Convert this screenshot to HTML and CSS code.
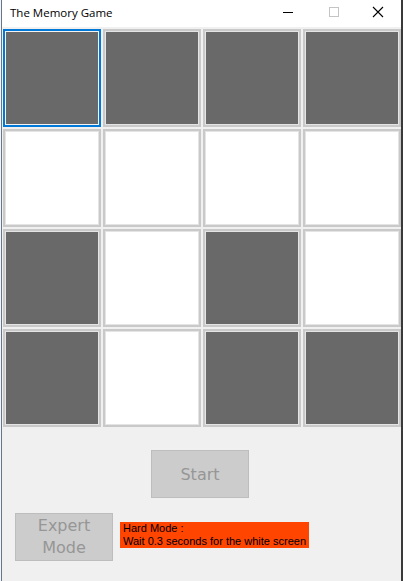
FILE: index.html
```html
<!DOCTYPE html>
<html>
<head>
<meta charset="utf-8">
<title>The Memory Game</title>
<link rel="stylesheet" href="styles.css">
</head>
<body>
<div class="window">
  <div class="titlebar">
    <span class="title">The Memory Game</span>
    <div class="controls">
      <span class="ctl"><svg width="46" height="27" viewBox="0 0 46 27"><line x1="20" y1="12.5" x2="30" y2="12.5" stroke="#000" stroke-width="1"/></svg></span>
      <span class="ctl"><svg width="46" height="27" viewBox="0 0 46 27"><rect x="20.5" y="7.5" width="9" height="9" fill="none" stroke="#c4c4c4" stroke-width="1"/></svg></span>
      <span class="ctl"><svg width="46" height="27" viewBox="0 0 46 27"><path d="M18 7 L28 17 M28 7 L18 17" stroke="#000" stroke-width="1.1" fill="none"/></svg></span>
    </div>
  </div>
  <div class="client">
    <div class="grid">
      <div class="tile dark focus"><div class="face"></div></div>
      <div class="tile dark"><div class="face"></div></div>
      <div class="tile dark"><div class="face"></div></div>
      <div class="tile dark"><div class="face"></div></div>
      <div class="tile light"><div class="face"></div></div>
      <div class="tile light"><div class="face"></div></div>
      <div class="tile light"><div class="face"></div></div>
      <div class="tile light"><div class="face"></div></div>
      <div class="tile dark"><div class="face"></div></div>
      <div class="tile light"><div class="face"></div></div>
      <div class="tile dark"><div class="face"></div></div>
      <div class="tile light"><div class="face"></div></div>
      <div class="tile dark"><div class="face"></div></div>
      <div class="tile light"><div class="face"></div></div>
      <div class="tile dark"><div class="face"></div></div>
      <div class="tile dark"><div class="face"></div></div>
    </div>
    <div class="start-row">
      <div class="btn start">Start</div>
    </div>
    <div class="bottom-row">
      <div class="btn expert">Expert<br>Mode</div>
      <div class="hint">Hard Mode :<br>Wait 0.3 seconds for the white screen</div>
    </div>
  </div>
</div>
</body>
</html>
```
FILE: styles.css
```css
html, body {
  margin: 0;
  padding: 0;
  background: #f4f4f4;
}
.window {
  margin-left: 1px;
  width: 399px;
  height: 581px;
  border-left: 1px solid #66768c;
  border-right: 2px solid #3a3a3a;
  background: #f0f0f0;
  display: flex;
  flex-direction: column;
}
.titlebar {
  height: 27px;
  background: #ffffff;
  display: flex;
  align-items: center;
}
.title {
  padding-left: 8px;
  font-family: "Open Sans", "Noto Sans", sans-serif;
  font-size: 11.5px;
  color: #000;
  line-height: 27px;
  margin-top: -3px;
}
.controls {
  margin-left: auto;
  display: flex;
  height: 27px;
}
.ctl {
  width: 46px;
  height: 27px;
  display: block;
}
.ctl svg {
  display: block;
}
.client {
  flex: 1;
  background: #f0f0f0;
}
.grid {
  display: grid;
  grid-template-columns: repeat(4, 98px);
  grid-auto-rows: 98px;
  gap: 2px;
  padding: 2px 0 0 1px;
}
.tile {
  box-sizing: border-box;
  border: 2px solid #c9c9c9;
  padding: 1px;
  background: #e4e4e4;
}
.tile.focus {
  border-color: #0078d7;
  background: #f4f4f4;
}
.face {
  width: 100%;
  height: 100%;
}
.dark .face {
  background: #696969;
}
.light .face {
  background: #ffffff;
}
.btn {
  box-sizing: border-box;
  width: 98px;
  height: 48px;
  background: #cccccc;
  border: 1px solid #bdbdbd;
  color: #969696;
  font-family: "DejaVu Sans", sans-serif;
  font-size: 16px;
  display: flex;
  align-items: center;
  justify-content: center;
  text-align: center;
}
.start-row {
  padding: 23px 0 0 149px;
}
.bottom-row {
  display: flex;
  align-items: flex-start;
  padding: 15px 0 0 13px;
}
.expert {
  line-height: 22px;
}
.hint {
  margin-left: 7px;
  margin-top: 9px;
  width: 189px;
  height: 26px;
  box-sizing: border-box;
  padding-left: 3px;
  background: #ff4500;
  color: #000;
  font-family: "Liberation Sans", Arial, sans-serif;
  font-size: 11px;
  line-height: 13px;
  white-space: nowrap;
}
```
